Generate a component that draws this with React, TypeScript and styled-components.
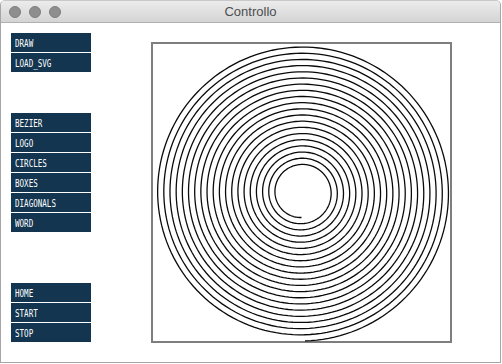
import React, { useMemo } from "react";
import styled, { createGlobalStyle } from "styled-components";

const GlobalStyle = createGlobalStyle`
  html, body {
    margin: 0;
    padding: 0;
    background: #ffffff;
  }
  body {
    font-family: "Liberation Sans", Arial, sans-serif;
  }
`;

const Window = styled.div`
  width: 501px;
  height: 363px;
  box-sizing: border-box;
  border: 1px solid #a6a6a6;
  border-top-color: #c8c8c8;
  border-radius: 5px 5px 0 0;
  background: #ffffff;
  display: flex;
  flex-direction: column;
  overflow: hidden;
`;

const TitleBar = styled.div`
  position: relative;
  height: 21px;
  flex-shrink: 0;
  background: linear-gradient(#ececec, #d4d4d4);
  border-bottom: 1px solid #b0b0b0;
  display: flex;
  align-items: center;
  justify-content: center;
  color: #4d4d4d;
  font-size: 13px;
`;

const Lights = styled.div`
  position: absolute;
  left: 8px;
  top: 5px;
  display: flex;
  gap: 8px;
`;

const Light = styled.span`
  width: 12px;
  height: 12px;
  border-radius: 50%;
  box-sizing: border-box;
  background: #8e8e8e;
  border: 1px solid #7e7e7e;
`;

const Content = styled.div`
  flex: 1;
  display: flex;
`;

const Sidebar = styled.div`
  width: 150px;
  box-sizing: border-box;
  padding-left: 10px;
  display: flex;
  flex-direction: column;
`;

const Group = styled.div<{ $top: number }>`
  margin-top: ${(p) => p.$top}px;
  display: flex;
  flex-direction: column;
  gap: 1px;
`;

const Button = styled.div`
  width: 80px;
  height: 19px;
  box-sizing: border-box;
  padding: 1px 0 0 4px;
  background: #133550;
  color: #ffffff;
  font-family: "DejaVu Sans Mono", monospace;
  font-size: 10.5px;
  display: flex;
  align-items: center;
  overflow: hidden;
`;

const Label = styled.span`
  display: inline-block;
  white-space: nowrap;
  transform: scaleX(0.72);
  transform-origin: left center;
`;

const Canvas = styled.div`
  margin-top: 19px;
  width: 301px;
  height: 301px;
  box-sizing: border-box;
  border: 2px solid #7e7e7e;
  position: relative;
  svg {
    display: block;
    overflow: visible;
  }
`;

const groups: { top: number; items: string[] }[] = [
  { top: 10, items: ["DRAW", "LOAD_SVG"] },
  { top: 41, items: ["BEZIER", "LOGO", "CIRCLES", "BOXES", "DIAGONALS", "WORD"] },
  { top: 51, items: ["HOME", "START", "STOP"] },
];

function Spiral() {
  const d = useMemo(() => {
    const cx = 148.5;
    const cy = 148.5;
    const turns = 20;
    const r0 = 25;
    const r1 = 148.5;
    const total = turns * Math.PI * 2;
    const pts: string[] = [];
    for (let t = 0; t <= total; t += 0.04) {
      const r = r0 + ((r1 - r0) * t) / total;
      const x = cx - r * Math.sin(t);
      const y = cy + r * Math.cos(t);
      pts.push(`${x.toFixed(2)},${y.toFixed(2)}`);
    }
    return "M" + pts.join("L");
  }, []);
  return (
    <svg width="297" height="297" viewBox="0 0 297 297">
      <path d={d} fill="none" stroke="#0a0a0a" strokeWidth="1.3" />
    </svg>
  );
}

export default function App() {
  return (
    <>
      <GlobalStyle />
      <Window>
        <TitleBar>
          <Lights>
            <Light />
            <Light />
            <Light />
          </Lights>
          Controllo
        </TitleBar>
        <Content>
          <Sidebar>
            {groups.map((g) => (
              <Group key={g.items[0]} $top={g.top}>
                {g.items.map((label) => (
                  <Button key={label}>
                    <Label>{label}</Label>
                  </Button>
                ))}
              </Group>
            ))}
          </Sidebar>
          <Canvas>
            <Spiral />
          </Canvas>
        </Content>
      </Window>
    </>
  );
}
